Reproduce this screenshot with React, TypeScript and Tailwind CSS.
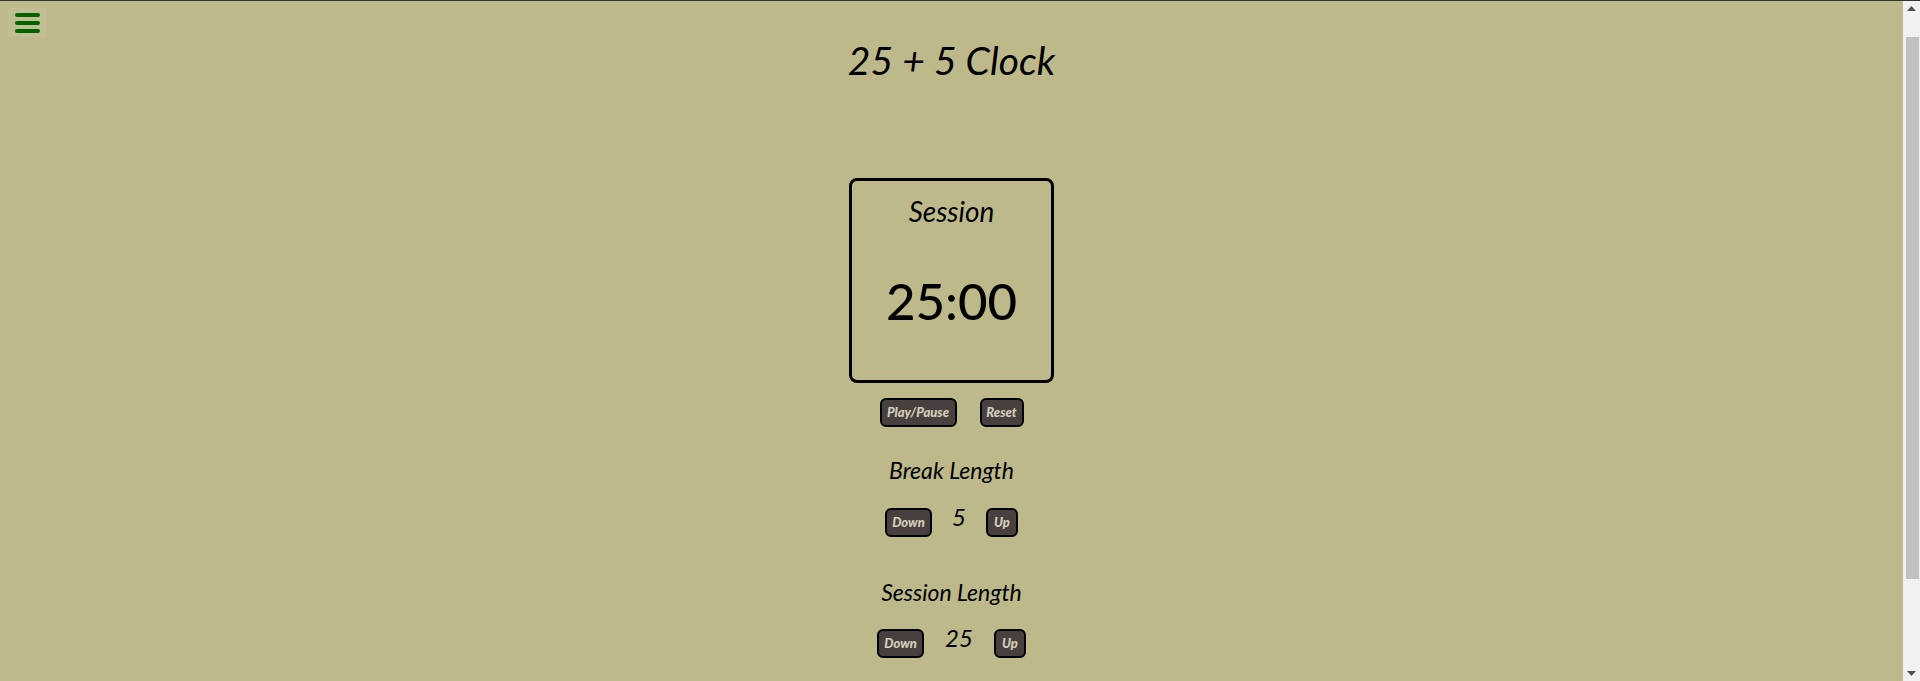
const Btn = ({ label, w }: { label: string; w: string }) => (
  <button
    className={`${w} h-[29px] rounded-[6px] border-2 border-black bg-[#48403f] text-[13px] font-black italic text-[#d6cfba] leading-none`}
  >
    {label}
  </button>
);

const LengthControl = (props: {
  title: string;
  value: string;
  titleMt: string;
  rowMt: string;
  gap: string;
}) => {
  return (
    <div className="flex flex-col items-center">
      <p className={`${props.titleMt} text-[23px] leading-none`}>{props.title}</p>
      <div className={`${props.rowMt} flex items-start ${props.gap}`}>
        <Btn label="Down" w="w-[47px]" />
        <span className="text-[24px] leading-none mt-[-3px]">{props.value}</span>
        <Btn label="Up" w="w-[32px]" />
      </div>
    </div>
  );
};

const Scrollbar = () => (
  <div className="w-[17px] shrink-0 bg-[#f1f1f1] flex flex-col items-center">
    <svg width="9" height="5" viewBox="0 0 9 5" className="mt-[5px]">
      <path d="M0 5 L4.5 0 L9 5 Z" fill="#505050" />
    </svg>
    <div className="mt-[26px] ml-[1px] w-[13px] h-[542px] bg-[#c1c1c1]" />
    <div className="flex-1" />
    <svg width="9" height="5" viewBox="0 0 9 5" className="mb-[5px]">
      <path d="M0 0 L9 0 L4.5 5 Z" fill="#505050" />
    </svg>
  </div>
);

export default function App() {
  return (
    <div className="h-[681px] overflow-hidden flex bg-[#bdb98b] border-t border-[#333]">
      <div className="relative flex-1 font-['Lato',sans-serif] italic text-black">
        <div className="absolute left-[8px] top-[7px] w-[39px] h-[29px] bg-[#c2be93] flex flex-col items-center justify-center gap-[4px]">
          <span className="block w-[25px] h-[4px] rounded-full bg-[#006400]" />
          <span className="block w-[25px] h-[4px] rounded-full bg-[#006400]" />
          <span className="block w-[25px] h-[4px] rounded-full bg-[#006400]" />
        </div>

        <div className="flex flex-col items-center">
          <h1 className="pt-[40px] text-[39px] leading-none">25 + 5 Clock</h1>

          <div className="mt-[98px] w-[205px] h-[205px] border-[3px] border-black rounded-[8px] flex flex-col items-center">
            <p className="pt-[16px] text-[28px] leading-none">Session</p>
            <p className="mt-[50px] text-[51px] leading-none not-italic font-medium">25:00</p>
          </div>

          <div className="mt-[15px] flex gap-[23px]">
            <Btn label="Play/Pause" w="w-[77px]" />
            <Btn label="Reset" w="w-[44px]" />
          </div>

          <LengthControl title="Break Length" value="5" titleMt="mt-[32px]" rowMt="mt-[26px]" gap="gap-[20px]" />
          <LengthControl title="Session Length" value="25" titleMt="mt-[44px]" rowMt="mt-[25px]" gap="gap-[21px]" />
        </div>
      </div>
      <Scrollbar />
    </div>
  );
}
